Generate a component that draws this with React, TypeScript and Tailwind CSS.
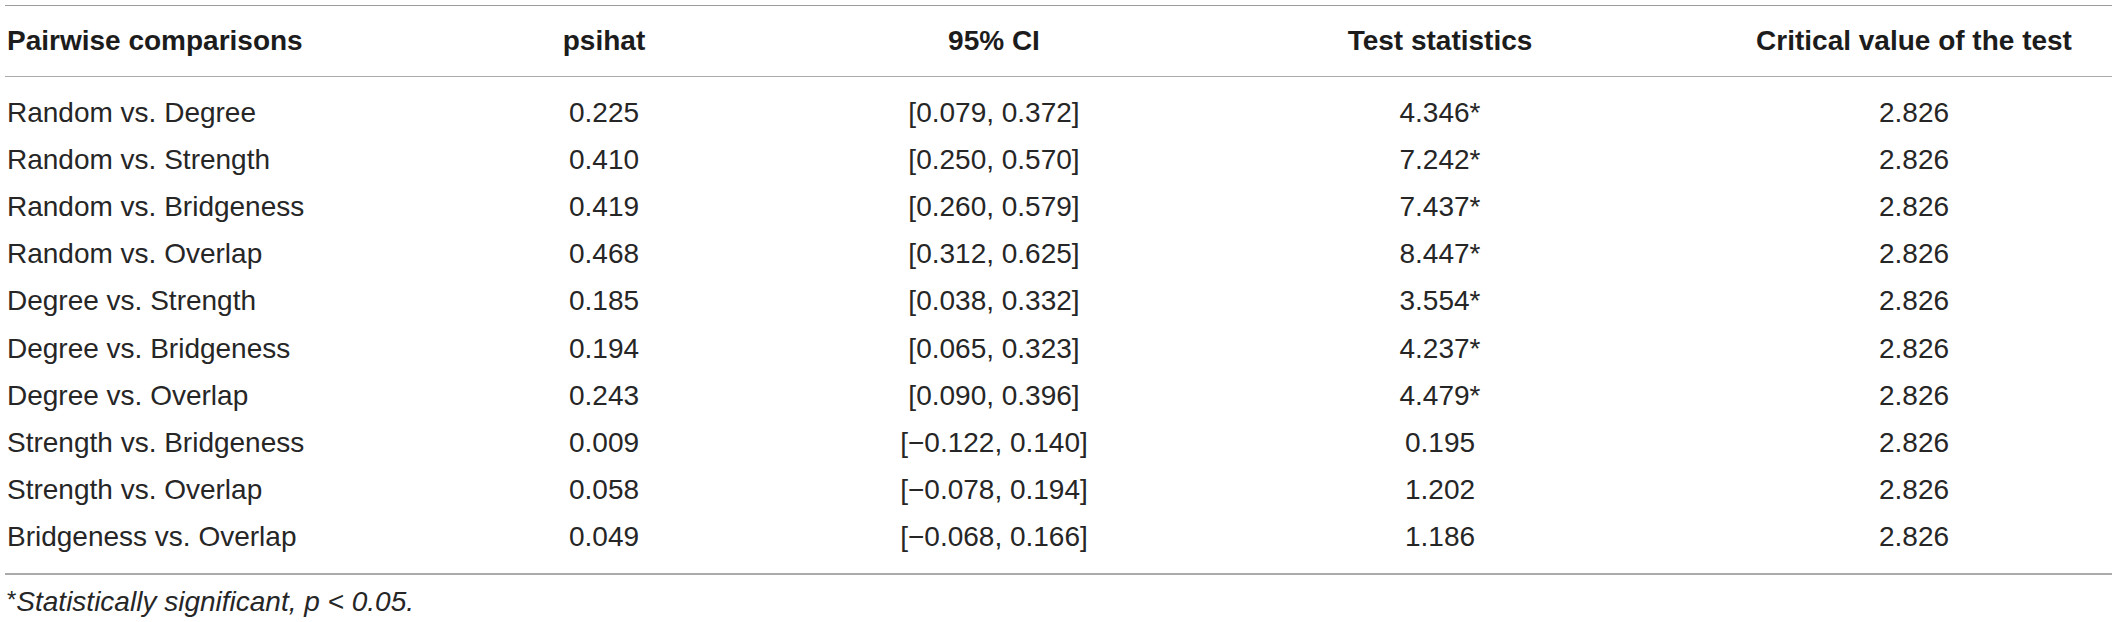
const rows: [string, string, string, string, string][] = [
  ["Random vs. Degree", "0.225", "[0.079, 0.372]", "4.346*", "2.826"],
  ["Random vs. Strength", "0.410", "[0.250, 0.570]", "7.242*", "2.826"],
  ["Random vs. Bridgeness", "0.419", "[0.260, 0.579]", "7.437*", "2.826"],
  ["Random vs. Overlap", "0.468", "[0.312, 0.625]", "8.447*", "2.826"],
  ["Degree vs. Strength", "0.185", "[0.038, 0.332]", "3.554*", "2.826"],
  ["Degree vs. Bridgeness", "0.194", "[0.065, 0.323]", "4.237*", "2.826"],
  ["Degree vs. Overlap", "0.243", "[0.090, 0.396]", "4.479*", "2.826"],
  ["Strength vs. Bridgeness", "0.009", "[\u22120.122, 0.140]", "0.195", "2.826"],
  ["Strength vs. Overlap", "0.058", "[\u22120.078, 0.194]", "1.202", "2.826"],
  ["Bridgeness vs. Overlap", "0.049", "[\u22120.068, 0.166]", "1.186", "2.826"],
]

const cols = "grid grid-cols-[377px_444px_336px_556px_392px]"

export default function App() {
  return (
    <div className="w-[2117px] h-[622px] bg-white px-[5px] pt-[5px] text-[28px] text-[#262626]" style={{ fontFamily: '"Liberation Sans", Arial, sans-serif' }}>
      <div className="border-t border-[#9c9c9c]">
        {/* header */}
        <div className={`${cols} h-[71px] items-center border-b border-[#ababab] font-bold text-[#1c1c1c]`}>
          <div className="pl-[2px]">Pairwise comparisons</div>
          <div className="text-center">psihat</div>
          <div className="text-center">95% CI</div>
          <div className="text-center">Test statistics</div>
          <div className="text-center">Critical value of the test</div>
        </div>

        {/* body */}
        <div className="py-3 border-b-2 border-[#ababab]">
          {rows.map(r => (
            <div key={r[0]} className={`${cols} h-[47.2px] items-center`}>
              <div className="pl-[2px]">{r[0]}</div>
              <div className="text-center">{r[1]}</div>
              <div className="text-center">{r[2]}</div>
              <div className="text-center">{r[3]}</div>
              <div className="text-center">{r[4]}</div>
            </div>
          ))}
        </div>
      </div>

      <p className="mt-[11px] pl-[2px] leading-8">
        <span className="relative -top-[3px] text-[24px]">*</span>
        <span className="italic">Statistically significant, p &lt; 0.05.</span>
      </p>
    </div>
  )
}
